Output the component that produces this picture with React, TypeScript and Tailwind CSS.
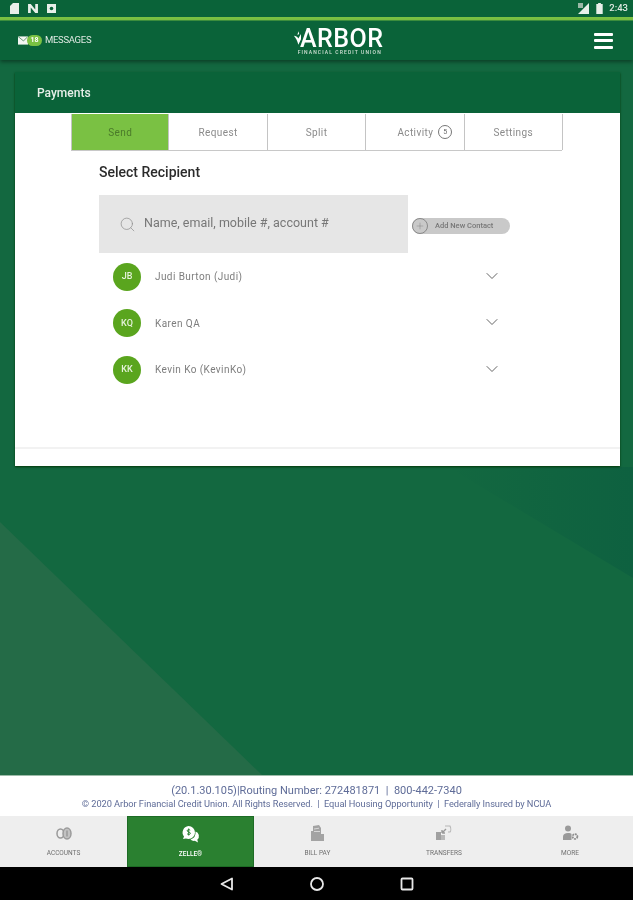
import React from 'react';
import { ChevronDown, Search, Plus } from 'lucide-react';

const tabs = ['Send', 'Request', 'Split', 'Activity', 'Settings'];

const contacts = [
  { initials: 'JB', name: 'Judi Burton (Judi)' },
  { initials: 'KQ', name: 'Karen QA' },
  { initials: 'KK', name: 'Kevin Ko (KevinKo)' },
];

const AccountsIcon = () => (
  <svg width="16" height="13" viewBox="0 0 16 13" fill="none" stroke="#9a9a9a" strokeWidth="1.500">
    <ellipse cx="4.500" cy="6.500" rx="3.500" ry="4.500" />
    <ellipse cx="11" cy="6.500" rx="4" ry="5.500" fill="#c2c2c2" />
    <path d="M11 3.500v6" />
  </svg>
);

const ZelleIcon = () => (
  <svg width="19" height="17" viewBox="0 0 19 17">
    <path d="M7.500 0a6.500 6.500 0 0 1 0 13c-1 0-1.800-.2-2.600-.5L2 13l1-2.500A6.500 6.500 0 0 1 7.500 0z" fill="#fff" />
    <path d="M14.500 5.500a4.800 4.800 0 0 1 1.800 8.200L17 16.500l-3.200-1.700a4.800 4.800 0 0 1-4.300-1.300 7.500 7.500 0 0 0 5-8z" fill="#fff" />
    <path d="M9.200 4.200C8.400 3.400 6.200 3.400 6.200 4.800c0 1.500 3.200 1 3.200 2.500 0 1.400-2.300 1.400-3.300.5M7.700 2.500v7" stroke="#2a8030" strokeWidth="1" fill="none" />
  </svg>
);

const BillPayIcon = () => (
  <svg width="15" height="17" viewBox="0 0 15 17">
    <path d="M3 1l6-1 2 3v6h3v7H1V6h2z" fill="#a3a3a3" />
    <path d="M4 4l5-.8M4 6.500h6" stroke="#e4e4e4" strokeWidth="0.800" />
  </svg>
);

const TransfersIcon = () => (
  <svg width="16" height="16" viewBox="0 0 16 16" fill="none">
    <path d="M0 7h5v8H0z" fill="#a0a0a0" />
    <path d="M5 10h4v5H5z" fill="#b8b8b8" />
    <path d="M6 8l4-4M6 8h3M6 8V5" stroke="#999" strokeWidth="1.400" />
    <path d="M9 1h5c1 2 1 5 0 6h-2" stroke="#b5b5b5" strokeWidth="1.100" />
  </svg>
);

const MoreIcon = () => (
  <svg width="17" height="17" viewBox="0 0 17 17">
    <circle cx="6" cy="3.500" r="3" fill="#9a9a9a" />
    <path d="M1 15v-3.500C1 9.500 3 8 6 8c2 0 3 .4 3.500 1v6z" fill="#9a9a9a" />
    <circle cx="13" cy="11.500" r="2.400" fill="none" stroke="#8f8f8f" strokeWidth="1.800" strokeDasharray="1.800 .7" />
  </svg>
);

const navItems = [
  { label: 'ACCOUNTS', icon: <AccountsIcon />, width: 'w-[127px]' },
  { label: 'ZELLE®', icon: <ZelleIcon />, width: 'w-[127px]', active: true },
  { label: 'BILL PAY', icon: <BillPayIcon />, width: 'w-[127px]' },
  { label: 'TRANSFERS', icon: <TransfersIcon />, width: 'w-[126px]' },
  { label: 'MORE', icon: <MoreIcon />, width: 'w-[126px]' },
];

const StatusBar = () => (
  <div className="h-[17px] bg-[#0a6339] flex items-center justify-between pl-[10px] pr-[5px]">
    <div className="flex items-center gap-[9px]">
      <svg width="9" height="11" viewBox="0 0 9 11"><path d="M3 0h6v11H0V3z" fill="#e8efe9" /></svg>
      <svg width="10" height="9" viewBox="0 0 11 10">
        <path d="M0 0h3l5 6V0h3v10H8L3 4v6H0z" fill="#e8efe9" />
      </svg>
      <svg width="9" height="9" viewBox="0 0 10 10">
        <path d="M0 0h10v10H0z" fill="#e8efe9" />
        <circle cx="5" cy="5" r="2" fill="#0a6339" />
      </svg>
    </div>
    <div className="flex items-center">
      <svg width="11" height="11" viewBox="0 0 11 11"><path d="M11 0v11H0z" fill="#e8efe9" /><path d="M0 0h5v5H0z" fill="#9ab8a6" /></svg>
      <svg className="ml-[7px]" width="7" height="11" viewBox="0 0 7 12"><path d="M2 0h3v1h2v11H0V1h2z" fill="#e8efe9" /></svg>
      <span className="ml-[6px] text-[9.500px] font-medium text-[#dfe9e2]">2:43</span>
    </div>
  </div>
);

const Header = () => (
  <div className="relative z-10 h-[39px] bg-[#0a6339] flex items-center pl-[18px] pr-[20px] shadow-[0_2px_4px_rgba(0,0,0,0.4)]">
    <div className="w-[275px] flex items-center">
      <svg width="10" height="9" viewBox="0 0 11 9">
        <path d="M0 0h11v9H0z" fill="#f2f6f2" />
        <path d="M0 0l6 5 5-5" fill="none" stroke="#5b8f6b" strokeWidth="1" />
      </svg>
      <span className="-ml-px h-[11px] w-[15px] rounded-full bg-[#7ac143] text-white text-[7px] font-bold flex items-center justify-center">18</span>
      <span className="ml-[3px] text-[9.500px] tracking-[-0.3px] text-[#dfe9e2]">MESSAGES</span>
    </div>
    <div className="flex flex-col items-center pt-[1px]">
      <div className="flex items-center h-[21px]">
        <svg className="-mr-[1px]" width="8" height="14" viewBox="0 0 9 15">
          <path d="M1 5c2 0 4 1 5 3L9 3v6l-3 6C5 11 3 7 1 5z" fill="#fff" />
          <path d="M6 0l1 3-2 1z" fill="#fff" />
        </svg>
        <span className="text-[25px] leading-[21px] font-medium text-white tracking-[0.5px]">ARBOR</span>
      </div>
      <span className="ml-[3px] text-[5px] leading-[6px] font-medium tracking-[1.1px] text-[#cfe0d4]">FINANCIAL CREDIT UNION</span>
    </div>
    <div className="ml-auto w-[19px] flex flex-col gap-[3.500px]">
      <span className="h-[3px] rounded-[1px] bg-white" />
      <span className="h-[3px] rounded-[1px] bg-white" />
      <span className="h-[3px] rounded-[1px] bg-white" />
    </div>
  </div>
);

const Tabs = () => (
  <div className="ml-[56px] mt-px w-[491px] h-[37px] flex border-b border-[#c8c8c8]">
    {tabs.map((tab) => {
      const active = tab === 'Send';
      return (
        <div
          key={tab}
          className={`w-[98.400px] shrink-0 flex items-center justify-center text-[10px] tracking-[0.4px] border-r border-[#c4c4c4] first:border-l ${
            active ? 'bg-[#7ac143] text-[#4b7a2a] border-[#5c8f3a]' : 'text-[#8a8a8a]'
          } ${tab === 'Activity' ? 'pl-[20px]' : ''}`}
        >
          {tab}
          {tab === 'Activity' && (
            <span className="ml-[5px] w-[14px] h-[14px] rounded-full border border-[#777] flex items-center justify-center text-[7px] text-[#666]">
              5
            </span>
          )}
        </div>
      );
    })}
  </div>
);

const ContactRow = ({ initials, name }: { initials: string; name: string }) => (
  <div className="h-[46.500px] flex items-center pl-[14px]">
    <div className="w-[28px] h-[28px] rounded-full bg-[#5aa51e] flex items-center justify-center text-[9px] font-medium text-[#e6f2dc]">
      {initials}
    </div>
    <span className="ml-[14px] text-[10px] tracking-[0.42px] text-[#7d7d7d]">{name}</span>
    <ChevronDown className="ml-auto -mt-[2px] text-[#666]" size={20} strokeWidth={1.200} />
  </div>
);

const Panel = () => (
  <div className="ml-[15px] mt-[12px] w-[605px] shadow-[0_1px_2px_rgba(0,50,0,0.9)]">
    <div className="h-[41px] pl-[22px] flex items-center bg-[#0a6339]">
      <span className="text-[12px] font-medium text-[#e8efe9]">Payments</span>
    </div>
    <div className="h-[353px] bg-white flex flex-col">
      <Tabs />
      <div className="pl-[84px] pt-[13px] flex-1">
        <h2 className="text-[14px] leading-[17px] font-medium text-[#2b2b2b]">Select Recipient</h2>
        <div className="mt-[14px] flex items-center">
          <div className="w-[309px] h-[58px] bg-[#e6e6e6] flex items-center pl-[20px]">
            <Search className="text-[#8c8c8c]" size={17} strokeWidth={1} />
            <span className="ml-[8px] -mt-[2px] text-[12.500px] text-[#777]">Name, email, mobile #, account #</span>
          </div>
          <div className="ml-[4px] mt-[3px] w-[98px] h-[16px] rounded-full bg-[#c9c9c9] flex items-center">
            <span className="w-[16px] h-[16px] rounded-full border border-[#8a8a8a] flex items-center justify-center">
              <Plus className="text-[#777]" size={10} strokeWidth={1} />
            </span>
            <span className="ml-[7px] text-[7.500px] font-medium text-[#777]">Add New Contact</span>
          </div>
        </div>
        <div className="w-[403px] mt-[0.500px]">
          {contacts.map((c) => (
            <ContactRow key={c.initials} {...c} />
          ))}
        </div>
      </div>
      <div className="h-[19px] border-t-2 border-[#f2f2f2]" />
    </div>
  </div>
);

const Footer = () => (
  <div className="h-[41px] bg-white flex flex-col items-center pt-[8px] border-t border-[#9dbba9]">
    <p className="text-[11px] leading-[14px] text-[#5f6c98]">
      (20.1.30.105)|Routing Number: 272481871&nbsp; |&nbsp; 800-442-7340
    </p>
    <p className="text-[9.250px] leading-[12px] text-[#5f6c98] tracking-[-0.05px]">
      © 2020 Arbor Financial Credit Union. All Rights Reserved.&nbsp; |&nbsp; Equal Housing Opportunity&nbsp; |&nbsp; Federally Insured by NCUA
    </p>
  </div>
);

const BottomNav = () => (
  <div className="h-[51px] bg-[#eeeeee] flex">
    {navItems.map((item) => (
      <div
        key={item.label}
        className={`${item.width} flex flex-col items-center pt-[7px] ${
          item.active ? 'bg-[#2a8030] border border-[#1d6b25] text-white font-medium' : 'text-[#6f6f6f]'
        }`}
      >
        <div className="h-[20px] flex items-center">{item.icon}</div>
        <span className="mt-[6px] text-[6.500px] leading-[8px]">{item.label}</span>
      </div>
    ))}
  </div>
);

const SystemNav = () => (
  <div className="h-[33px] bg-black flex items-center justify-center gap-[76px]">
    <svg width="14" height="14" viewBox="0 0 14 14" fill="none" stroke="#e8e8e8" strokeWidth="1.800">
      <path d="M12 1.500v11L1.500 7z" strokeLinejoin="round" />
    </svg>
    <svg width="14" height="14" viewBox="0 0 14 14" fill="none" stroke="#e8e8e8" strokeWidth="1.800">
      <circle cx="7" cy="7" r="6" />
    </svg>
    <svg width="14" height="14" viewBox="0 0 14 14" fill="none" stroke="#e8e8e8" strokeWidth="1.800">
      <rect x="1.500" y="1.500" width="11" height="11" rx="1" />
    </svg>
  </div>
);

export default function App() {
  return (
    <div className="w-[633px] h-[900px] flex flex-col overflow-hidden bg-[#136840] blur-[0.5px] font-['Roboto',sans-serif]">
      <StatusBar />
      <div className="h-[4px] bg-[#7ac143] border-b border-[#3f9440]" />
      <Header />
      <main className="relative flex-1 bg-[#136840]">
        {/* background facets */}
        <div className="absolute left-0 bottom-0 w-[262px] h-[253px] bg-[#246b47] [clip-path:polygon(0_0,100%_100%,0_100%)]" />
        <div className="absolute right-0 top-[407px] w-[185px] h-[111px] bg-linear-to-l from-[#0e6140] to-[#136840] [clip-path:polygon(0_0,100%_0,100%_100%)]" />
        <div className="relative">
          <Panel />
        </div>
      </main>
      <Footer />
      <BottomNav />
      <SystemNav />
    </div>
  );
}
